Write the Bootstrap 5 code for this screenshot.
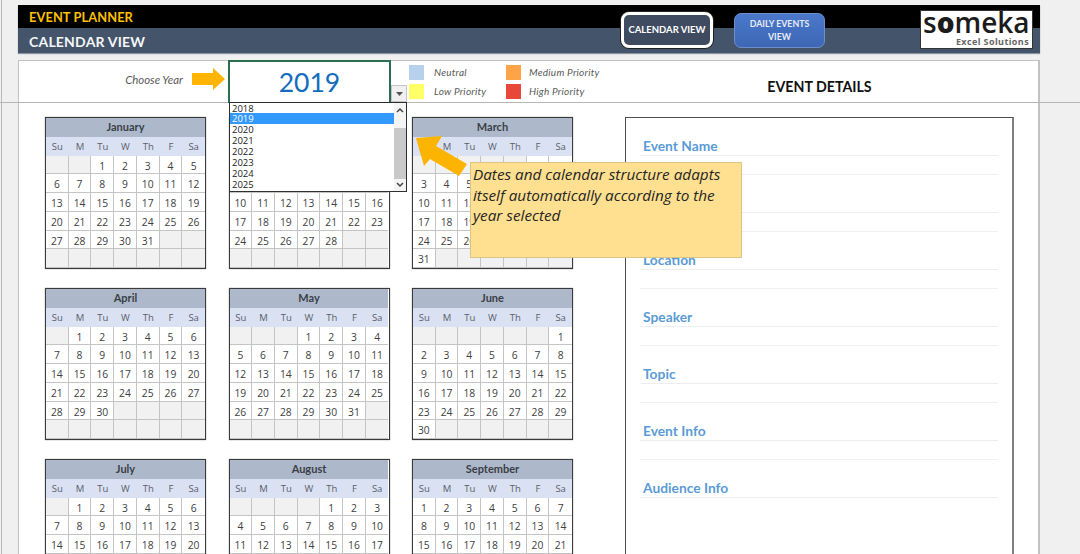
<!DOCTYPE html>
<html lang="en">
<head>
<meta charset="utf-8">
<title>Event Planner - Calendar View</title>
<link rel="stylesheet" href="https://cdn.jsdelivr.net/npm/bootstrap@5.3.0/dist/css/bootstrap.min.css">
<style>
html,body{height:554px;overflow:hidden}
body{margin:0;font-family:"Lato","Liberation Sans",sans-serif;background:linear-gradient(90deg,#f0f0f0 1px,#b9b9b9 1px,#b9b9b9 2px,#f0f0f0 2px)}
.wb{width:1022px;margin-left:18px;padding-top:5px}
.hdr{height:48px;background:linear-gradient(#000 23px,#44546a 23px);box-shadow:0 1px 1px #8a94a3}
.hdr-titles{width:603px;padding-left:11px}
.t1{height:23px;line-height:25px;font-size:12.8px;color:#ffc000;letter-spacing:.1px}
.t2{height:25px;line-height:27px;font-size:14px;color:#f4f6f8;letter-spacing:.2px}
.hbtn.btn{font-family:"Lato",sans-serif;font-weight:700;font-size:9.5px;line-height:13px;padding:0 0 1px;color:#fff}
.hb1.btn{width:92px;height:36px;margin-top:7px;background:#3e4b60;border:3px solid #fff;border-radius:8px;box-shadow:0 0 0 1px #222}
.hb2.btn{width:91px;height:35px;margin-top:8px;margin-left:21px;background:linear-gradient(#4a78cc,#3e66b4);border:1px solid #6d8fc9;border-radius:7px;color:#e6ecf6;font-size:8.8px}
.logo{width:113px;height:39px;margin-top:5px;margin-left:95px;border:1px solid #333;background:#fff;line-height:1}
.logo-a{font-family:"Open Sans",sans-serif;font-size:28px;font-weight:600;color:#1c1c1c;height:25px;line-height:23px;padding-left:2px;white-space:nowrap}
.logo-a b{font-weight:800}
.logo-b{font-family:"Open Sans",sans-serif;font-size:9px;font-weight:700;color:#666;letter-spacing:.4px;padding-right:3px;line-height:11px}
.pnl{margin-top:7px;height:494px;background:#fff;border:1px solid #c2c2c2;border-right-width:2px;border-bottom:0}
.top-row{height:42px}
.top-row::after{content:"";position:absolute;left:-19px;width:1080px;bottom:0;height:1px;background:#b5b5b5}
.ch-lbl{width:164px;font-size:11.4px;color:#595959;line-height:38px}
.yr-arrow{margin-left:9px;margin-right:3px;margin-top:7px}
.yr-box{width:163px;height:43px;margin-top:-1px;border:2px solid #2d6e50;border-bottom-width:1px;font-size:26.5px;color:#156cbd;line-height:40px;position:relative;z-index:3;background:#fff}
.dd-btn{width:16px;height:17px;margin-top:24px;background:#f0f0f0;border:1px solid #c5c5c5;position:relative;z-index:3}
.lgd{margin-left:2px;margin-top:4px;grid-template-columns:15px 82px 15px auto;grid-auto-rows:15px;row-gap:4px;font-size:10px;color:#595959;line-height:15px;letter-spacing:.25px}
.sw{width:15px;height:15px}
.lgd span{padding-left:10px;white-space:nowrap}
.lgd span:nth-of-type(even){padding-left:8px}
.det-ttl{position:absolute;left:606px;width:389px;top:0;font-size:14.2px;line-height:52px;color:#111}
.main{padding-top:14px;padding-left:26px}
.cal-wrap{grid-template-columns:repeat(3,161px);column-gap:22.5px;row-gap:19px}
.cal-m{height:152px;border:1px solid #3a3a3a;box-shadow:0 0 1px #777;grid-template-columns:repeat(7,1fr);grid-template-rows:repeat(8,18.75px);font-family:"Open Sans",sans-serif;font-size:10.3px;color:#404040;background:#fff}
.cal-t{grid-column:1 / -1;background:#adb9ca;font-weight:700;font-family:"Lato",sans-serif;font-size:11px;line-height:18px;color:#3a3f47;text-align:center}
.cal-d,.cal-c{text-align:center;line-height:20px}
.cal-d{background:#d9e1f2;color:#5a5f69;font-size:9.5px}
.cal-c{border-right:1px solid #c4c4c4;border-bottom:1px solid #c4c4c4}
.cal-c:nth-child(7n+8){border-right:0}
.cal-c.emp{background:#f1f1f1}
.evp{margin-left:52px;width:389px;height:460px;border:1px solid #4d4d4d;border-right:2px solid #808080;padding:19px 14px 0 14px}
.ev-row{height:57px}
.ev-l{height:19px;border-bottom:1px solid #eeeeee;font-weight:700;font-size:13.8px;line-height:17px;color:#5b9bd5;padding-left:3px}
.ev-b{height:19px;border-bottom:1px solid #f0f0f0}
.dd-list{position:absolute;left:211px;top:102px;width:178px;height:90px;border:1px solid #2f2f2f;background:#fff;z-index:4;font-family:"Open Sans",sans-serif}
.dd-items{width:164px;border-radius:0;background:transparent}
.dd-items .list-group-item{padding:0 0 0 2px;height:11px;line-height:11px;font-size:9.5px;color:#222;border:0;background:transparent}
.dd-items .list-group-item.active{background:#3399ff;color:#fff}
.sbar{position:absolute;right:0;top:0;width:12px;height:88px;background:#f4f4f4}
.sthumb{position:absolute;left:0;right:0;top:25px;height:51px;background:#c9c9c9}
.sbar svg{position:absolute;left:2px}
.callout{position:absolute;left:452px;top:162px;width:272px;height:96px;background:#ffdf90;border:1px solid #d8c587;padding:1px 2px;line-height:20.6px;color:#262626;z-index:6;font-family:"Open Sans",sans-serif;font-size:15.3px}
.call-arr{position:absolute;left:398px;top:130px;z-index:5}
</style>
</head>
<body>
<div class="wb position-relative">
  <header class="hdr d-flex align-items-start">
    <div class="hdr-titles fw-bold">
      <div class="t1">EVENT PLANNER</div>
      <div class="t2">CALENDAR VIEW</div>
    </div>
    <button type="button" class="btn hbtn hb1">CALENDAR VIEW</button>
    <button type="button" class="btn hbtn hb2">DAILY EVENTS<br>VIEW</button>
    <div class="logo">
      <div class="logo-a">s<b>o</b>meka</div>
      <div class="logo-b text-end">Excel Solutions</div>
    </div>
  </header>

  <section class="pnl">
    <div class="top-row d-flex position-relative">
      <div class="ch-lbl fst-italic text-end">Choose Year</div>
      <svg class="yr-arrow" width="33" height="22" viewBox="0 0 33 22"><path d="M0 5H21V0L33 11 21 22V17H0Z" fill="#ffb400"/></svg>
      <div class="yr-box text-center">2019</div>
      <div class="dd-btn d-flex align-items-center justify-content-center">
        <svg width="7" height="4" viewBox="0 0 7 4"><path d="M0 0H7L3.5 4Z" fill="#555"/></svg>
      </div>
      <div class="lgd d-grid fst-italic">
        <i class="sw" style="background:#b7d1ec"></i><span>Neutral</span>
        <i class="sw" style="background:#ffa347"></i><span>Medium Priority</span>
        <i class="sw" style="background:#ffff66"></i><span>Low Priority</span>
        <i class="sw" style="background:#e8483a"></i><span>High Priority</span>
      </div>
      <div class="det-ttl fw-bold text-center">EVENT DETAILS</div>
    </div>

    <div class="main d-flex align-items-start">
      <div id="cals" class="cal-wrap d-grid"></div>
      <div class="evp flex-shrink-0">
        <div class="ev-row"><div class="ev-l">Event Name</div><div class="ev-b"></div></div>
        <div class="ev-row"><div class="ev-l"></div><div class="ev-b"></div></div>
        <div class="ev-row"><div class="ev-l">Location</div><div class="ev-b"></div></div>
        <div class="ev-row"><div class="ev-l">Speaker</div><div class="ev-b"></div></div>
        <div class="ev-row"><div class="ev-l">Topic</div><div class="ev-b"></div></div>
        <div class="ev-row"><div class="ev-l">Event Info</div><div class="ev-b"></div></div>
        <div class="ev-row"><div class="ev-l">Audience Info</div></div>
      </div>
    </div>
  </section>

  <div class="dd-list">
    <div class="dd-items list-group">
      <div class="list-group-item">2018</div>
      <div class="list-group-item active">2019</div>
      <div class="list-group-item">2020</div>
      <div class="list-group-item">2021</div>
      <div class="list-group-item">2022</div>
      <div class="list-group-item">2023</div>
      <div class="list-group-item">2024</div>
      <div class="list-group-item">2025</div>
    </div>
    <div class="sbar">
      <div class="sthumb"></div>
      <svg style="top:4px" width="8" height="6" viewBox="0 0 8 6"><path d="M1 5L4 2L7 5" fill="none" stroke="#444" stroke-width="1.5"/></svg>
      <svg style="top:79px" width="8" height="6" viewBox="0 0 8 6"><path d="M1 1L4 4L7 1" fill="none" stroke="#444" stroke-width="1.5"/></svg>
    </div>
  </div>

  <svg class="call-arr" width="56" height="50" viewBox="0 0 56 50"><path d="M0 8L26 6L20 16L51 34L43 46L14 29L8 36Z" fill="#fdb400"/></svg>
  <div class="callout fst-italic">Dates and calendar structure adapts itself automatically according to the year selected</div>
</div>

<script>
var months=[["January",2,31],["February",5,28],["March",5,31],["April",1,30],["May",3,31],["June",6,30],["July",1,31],["August",4,31],["September",0,30]];
var dows=["Su","M","Tu","W","Th","F","Sa"];
var html="";
months.forEach(function(m){
  html+='<div class="cal-m d-grid overflow-hidden"><div class="cal-t">'+m[0]+'</div>';
  dows.forEach(function(d){html+='<div class="cal-d">'+d+'</div>';});
  for(var i=0;i<42;i++){
    var n=i-m[1]+1;
    var ok=n>=1&&n<=m[2];
    html+='<div class="cal-c'+(ok?'':' emp')+'">'+(ok?n:'')+'</div>';
  }
  html+='</div>';
});
document.getElementById("cals").innerHTML=html;
</script>
<script src="https://cdn.jsdelivr.net/npm/bootstrap@5.3.0/dist/js/bootstrap.bundle.min.js"></script>
</body>
</html>
